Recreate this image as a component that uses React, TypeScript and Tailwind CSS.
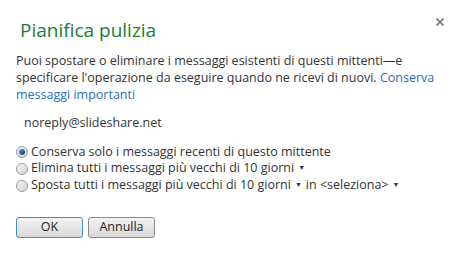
import React from "react";

const FONT = { fontFamily: '"Open Sans", "Noto Sans", "Liberation Sans", sans-serif' };

function Radio({ checked }: { checked?: boolean }) {
  return (
    <span className="relative inline-flex w-[12px] h-[12px] rounded-full border border-[#9a9a9a] bg-gradient-to-br from-[#f4f4f4] to-[#d4d4d4] items-center justify-center flex-shrink-0">
      {checked && (
        <span className="w-[6px] h-[6px] rounded-full bg-gradient-to-br from-[#5e9ad6] to-[#163c6b]" />
      )}
    </span>
  );
}

function Caret() {
  return <span className="relative top-[-2px] inline-block text-[7px] mx-[4px] text-[#333]">▼</span>;
}

export default function App() {
  return (
    <div className="w-[463px] h-[254px] bg-white text-[#333] overflow-hidden relative" style={FONT}>
      <div className="flex items-start justify-between pl-[20px] pr-[18px] pt-[17px]">
        <h1 className="text-[19px] leading-[26px] text-[#237a35]">Pianifica pulizia</h1>
        <svg width="10" height="10" viewBox="0 0 10 10" className="mt-[0px]">
          <path d="M1.5 1.5 L8.5 8.5 M8.5 1.5 L1.5 8.5" stroke="#8a8a8a" strokeWidth="2" />
        </svg>
      </div>

      <div className="px-[16px] pt-[9px] text-[12.5px] leading-[17px] whitespace-nowrap">
        <p>
          Puoi spostare o eliminare i messaggi esistenti di questi mittenti—e
          <br />
          specificare l'operazione da eseguire quando ne ricevi di nuovi.{" "}
          <span className="text-[#2a6fb8]">Conserva</span>
          <br />
          <span className="text-[#2a6fb8]">messaggi importanti</span>
        </p>

        <p className="pl-[8px] pt-[11px]">noreply@slideshare.net</p>

        <div className="pt-[12px] flex flex-col">
          <label className="flex items-center gap-[3px] h-[17px]">
            <Radio checked />
            <span>Conserva solo i messaggi recenti di questo mittente</span>
          </label>
          <label className="flex items-center gap-[3px] h-[17px]">
            <Radio />
            <span>
              Elimina tutti i messaggi più vecchi di 10 giorni
              <Caret />
            </span>
          </label>
          <label className="flex items-center gap-[3px] h-[17px]">
            <Radio />
            <span>
              Sposta tutti i messaggi più vecchi di 10 giorni
              <Caret />
              in &lt;seleziona&gt;
              <Caret />
            </span>
          </label>
        </div>

        <div className="flex gap-[5px] pt-[23px]">
          <button className="w-[67px] h-[21px] rounded-[3px] border border-[#3d8fc4] bg-gradient-to-b from-[#f3f3f3] to-[#d9d9d9] text-[12.5px] leading-none text-[#222]">
            OK
          </button>
          <button className="w-[67px] h-[21px] rounded-[3px] border border-[#8a8a8a] bg-gradient-to-b from-[#f3f3f3] to-[#d9d9d9] text-[12.5px] leading-none text-[#222]">
            Annulla
          </button>
        </div>
      </div>
    </div>
  );
}
